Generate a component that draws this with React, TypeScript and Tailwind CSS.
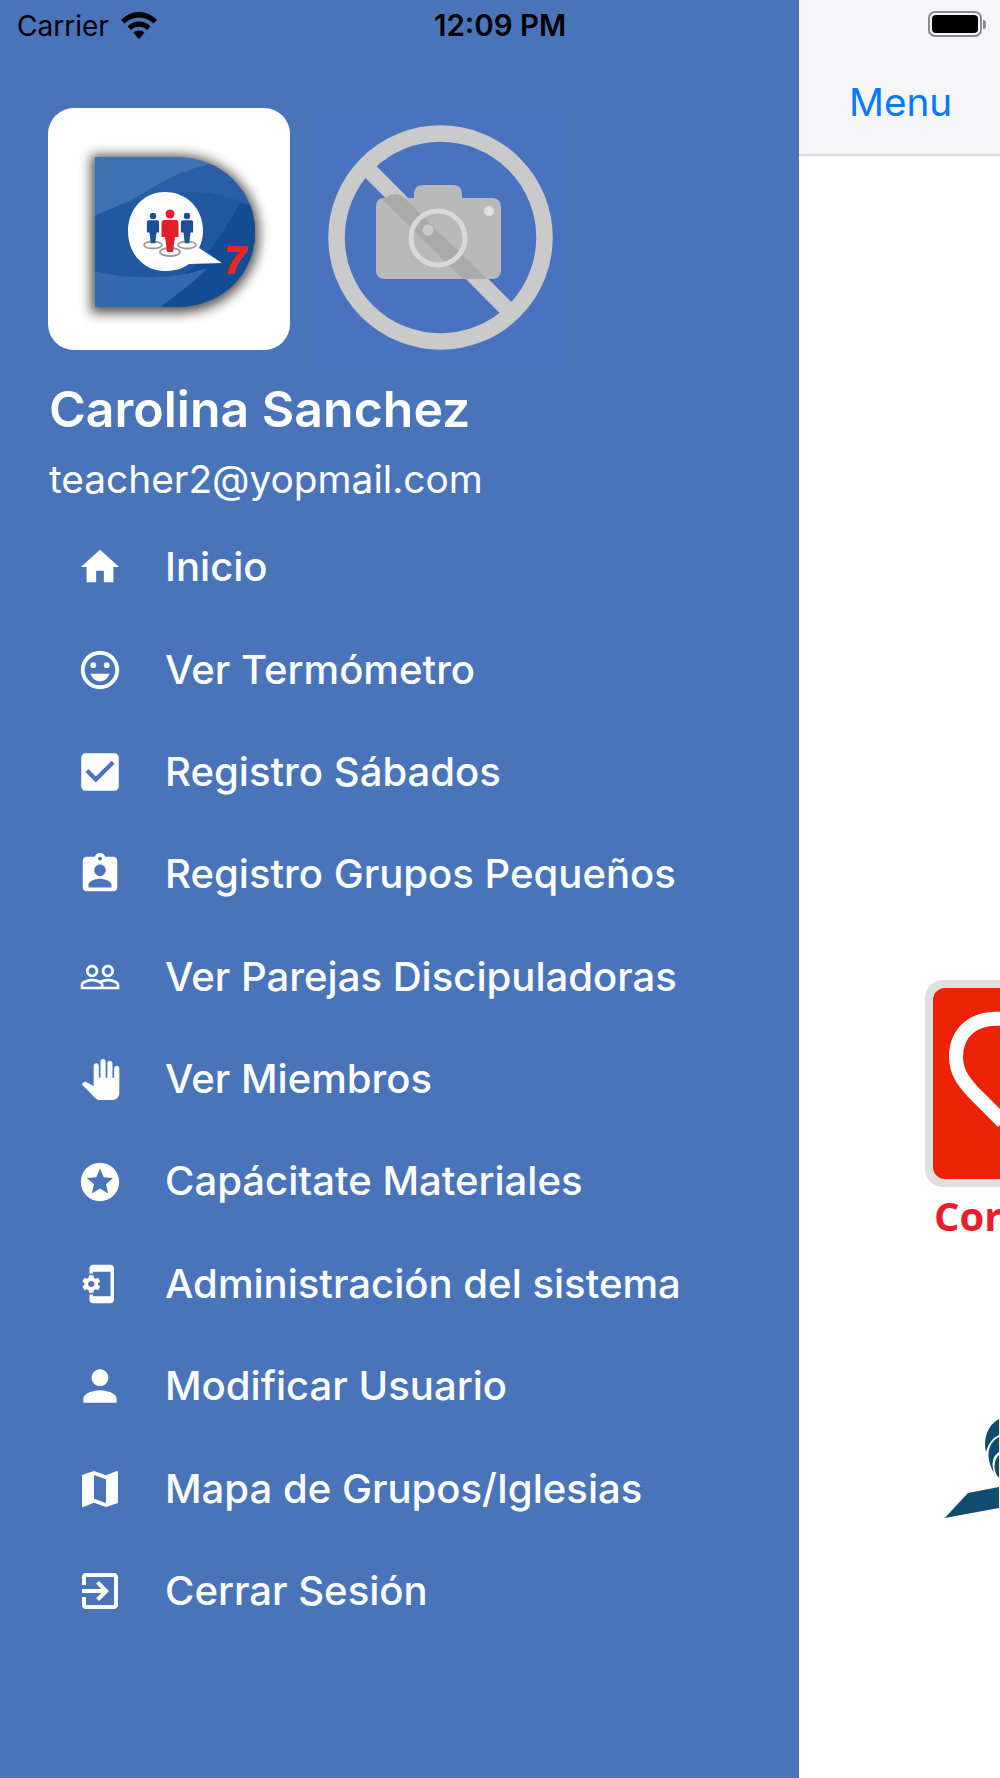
import {
  MdHome,
  MdOutlineEmojiEmotions,
  MdCheckBox,
  MdAssignmentInd,
  MdPeopleOutline,
  MdPanTool,
  MdStars,
  MdPhonelinkSetup,
  MdPerson,
  MdMap,
  MdExitToApp,
} from "react-icons/md";

const menuItems = [
  { label: "Inicio", icon: MdHome, size: "w-[46px] h-[46px]" },
  { label: "Ver Termómetro", icon: MdOutlineEmojiEmotions, size: "w-[46px] h-[46px]" },
  { label: "Registro Sábados", icon: MdCheckBox, size: "w-[50px] h-[50px]" },
  { label: "Registro Grupos Pequeños", icon: MdAssignmentInd, size: "w-[46px] h-[46px]" },
  { label: "Ver Parejas Discipuladoras", icon: MdPeopleOutline, size: "w-[42px] h-[42px]" },
  { label: "Ver Miembros", icon: MdPanTool, size: "w-[41px] h-[41px]" },
  { label: "Capácitate Materiales", icon: MdStars, size: "w-[46px] h-[46px]" },
  { label: "Administración del sistema", icon: MdPhonelinkSetup, size: "w-[42px] h-[42px]" },
  { label: "Modificar Usuario", icon: MdPerson, size: "w-[52px] h-[52px]" },
  { label: "Mapa de Grupos/Iglesias", icon: MdMap, size: "w-[48px] h-[48px]" },
  { label: "Cerrar Sesión", icon: MdExitToApp, size: "w-[48px] h-[48px]" },
];

function Person({ x, y, s, color }: { x: number; y: number; s: number; color: string }) {
  return (
    <g transform={`translate(${x} ${y}) scale(${s})`} fill={color}>
      <circle cx="0" cy="-14" r="4.5" />
      <path d="M-6 -8 H6 Q8.500 -8 8.500 -4 V9 H5 L3 24 H-3 L-5 9 H-8.500 V-4 Q-8.500 -8 -6 -8 Z" />
    </g>
  );
}

function AppLogo() {
  const d = "M47 49 H128 C175 49 207 84 207 124 C207 165 175 199 128 199 H47 Z";
  return (
    <svg viewBox="0 0 242 242" className="w-full h-full">
      <defs>
        <filter id="soft" x="-20%" y="-20%" width="140%" height="140%">
          <feGaussianBlur stdDeviation="6" />
        </filter>
        <clipPath id="dclip">
          <path d={d} />
        </clipPath>
      </defs>
      <path d={d} fill="#3a3530" opacity="0.85" filter="url(#soft)" transform="translate(0 2)" stroke="#3a3530" strokeWidth="8" />
      <g clipPath="url(#dclip)">
        <rect x="40" y="40" width="180" height="170" fill="#3f72b5" />
        <path d="M47 110 C95 90 120 62 170 55 L215 60 V205 H47 Z" fill="#2a5fa8" />
        <path d="M47 108 C85 88 140 75 190 92 L215 100 V205 H47 Z" fill="#20599f" />
        <path d="M47 175 C110 190 145 180 192 95 L215 100 V205 H125 Z" fill="#134c93" />
        <path d="M47 163 C80 172 125 172 160 160 C140 180 120 192 105 205 H47 Z" fill="#3369ae" />
      </g>
      <path
        d="M117 84 C140 84 155 102 155 122 C155 130 153 136 151 140 L174 155 L141 156 C134 161 126 163 117 163 C96 163 80 146 80 123 C80 101 96 84 117 84 Z"
        fill="#ffffff"
      />
      <g fill="none" stroke="#9a9a9a" strokeWidth="1.800">
        <ellipse cx="105" cy="137" rx="9" ry="3.500" />
        <ellipse cx="139" cy="137" rx="9" ry="3.500" />
        <ellipse cx="122" cy="144" rx="10" ry="4" />
      </g>
      <Person x={105} y={118} s={0.72} color="#1c4f98" />
      <Person x={139} y={118} s={0.72} color="#1c4f98" />
      <Person x={122} y={120} s={1} color="#df2027" />
      <text
        x="187"
        y="165"
        fill="#e8261f"
        stroke="#e8261f"
        strokeWidth="1.500"
        fontFamily="'Liberation Sans', sans-serif"
        fontWeight="700"
        fontStyle="italic"
        fontSize="37"
        textAnchor="middle"
      >
        7
      </text>
    </svg>
  );
}

function NoPhoto() {
  return (
    <svg viewBox="0 0 260 260" className="w-full h-full">
      <rect width="260" height="260" fill="#4973be" />
      <path d="M55 60 L200 206" stroke="#cacaca" strokeWidth="16" />
      <circle cx="130.500" cy="131.500" r="104" fill="none" stroke="#cacaca" strokeWidth="16.500" />
      <path
        d="M74 92 H104 V88 Q104 79 113 79 H143 Q152 79 152 88 V92 H182 Q191 92 191 101 V164 Q191 173 182 173 H75 Q66 173 66 164 V101 Q66 92 74 92 Z"
        fill="#b9b9b9"
      />
      <path d="M73 94 Q78 88 87 88 Q92 89 95 93 L177 173 H153 Z" fill="#aaaaaa" />
      <circle cx="128" cy="132" r="27" fill="none" stroke="#d9d9d9" strokeWidth="5" />
      <circle cx="118" cy="124" r="5.500" fill="#cacaca" />
      <circle cx="179" cy="105" r="5" fill="#e0e0e0" />
    </svg>
  );
}

function WifiIcon() {
  return (
    <svg viewBox="0 0 36 28" className="w-[36px] h-[28px]" fill="#000000">
      <path d="M18 0 C25 0 31 3 36 8 L32.5 11.5 C28.500 7.500 23.500 5.500 18 5.500 C12.500 5.500 7.500 7.500 3.500 11.500 L0 8 C5 3 11 0 18 0 Z" />
      <path d="M18 9.500 C22.500 9.500 26.500 11.200 29.500 14.500 L26 18 C23.800 15.800 21 14.700 18 14.700 C15 14.700 12.200 15.800 10 18 L6.500 14.500 C9.500 11.200 13.500 9.500 18 9.500 Z" />
      <path d="M18 18.500 C20.500 18.500 22 19.300 23.500 20.800 L18 27 L12.500 20.800 C14 19.300 15.500 18.500 18 18.500 Z" />
    </svg>
  );
}

export default function App() {
  return (
    <div className="w-[1000px] h-[1778px] flex overflow-hidden bg-white font-['Inter',sans-serif]">
      {/* Drawer */}
      <aside className="w-[799px] shrink-0 bg-[#4a74ba] text-white">
        <div className="h-[108px] pt-[10px]">
          <div className="flex items-center h-[32px] text-black text-[28px] leading-none">
            <span className="ml-[17px] w-[104px]">Carrier</span>
            <WifiIcon />
            <span className="ml-[277px] text-[29.5px] font-semibold">12:09 PM</span>
          </div>
        </div>

        <div className="flex pl-[48px]">
          <div className="w-[242px] h-[242px] rounded-[26px] bg-white overflow-hidden">
            <AppLogo />
          </div>
          <div className="w-[260px] h-[260px] ml-[20px] -mt-[2px] -mb-[20px]">
            <NoPhoto />
          </div>
        </div>

        <div className="pl-[49px] mt-[27px] text-[50px] leading-[64px] font-semibold">Carolina Sanchez</div>
        <div className="pl-[49px] mt-[14px] text-[38.800px] leading-[48px]">teacher2@yopmail.com</div>

        <nav className="mt-[13px]">
          {menuItems.map((item) => {
            const Icon = item.icon;
            return (
              <div key={item.label} className="flex items-center h-[102.4px] pl-[75px]">
                <div className="w-[50px] flex justify-center shrink-0">
                  <Icon className={item.size} />
                </div>
                <span className="ml-[40px] text-[40.100px] font-medium leading-none">{item.label}</span>
              </div>
            );
          })}
        </nav>
      </aside>

      {/* Screen behind the drawer */}
      <div className="flex-1 min-w-0 overflow-hidden">
        <header className="h-[156px] bg-[#f6f6f8] border-b-2 border-[#dcdcdc]">
          <div className="flex items-center h-[48px] pl-[129px]">
            <div className="w-[54px] h-[26px] border-2 border-[#8a8a8a] rounded-[7px] p-[2px] shrink-0">
              <div className="w-full h-full bg-black rounded-[4px]" />
            </div>
            <div className="w-[3px] h-[9px] bg-[#8a8a8a] rounded-r-sm ml-[1px] shrink-0" />
          </div>
          <div className="pl-[50px] mt-[32px] text-[#007aff] text-[38.700px] leading-[44px]">Menu</div>
        </header>

        <main className="pl-[126px] pt-[824px]">
          <div className="w-[270px] p-[8px] rounded-[18px] bg-[#e0e0e0]">
            <div className="h-[191px] rounded-[12px] bg-[#eb2205] overflow-hidden">
              <svg viewBox="0 0 100 191" className="w-[100px] h-[191px]">
                <path
                  d="M70 31 C40 28 23 45 23 69 C23 85 32 95 40 104 L70 134"
                  fill="none"
                  stroke="#ffffff"
                  strokeWidth="14"
                />
              </svg>
            </div>
          </div>
          <div className="ml-[9px] mt-[5px] text-[#ec1c2c] text-[40px] leading-[48px] font-bold font-['Open_Sans',sans-serif] whitespace-nowrap">
            Corazón
          </div>
          <svg viewBox="40 0 60 160" className="w-[60px] h-[160px] ml-[14px] mt-[140px]">
            <path d="M45.700 138 L69 113 L100 107 V128 Z" fill="#0f4c6e" />
            <path d="M100 39 C88 45 84 60 87 72 C90 62 94 58 100 55 Z" fill="#0f4c6e" />
            <path d="M100 57 C90 62 85 75 95 93 C92 82 94 76 100 72 Z" fill="#0f4c6e" />
            <path d="M100 75 C94 80 94 92 100 98 Z" fill="#0f4c6e" />
          </svg>
        </main>
      </div>
    </div>
  );
}
